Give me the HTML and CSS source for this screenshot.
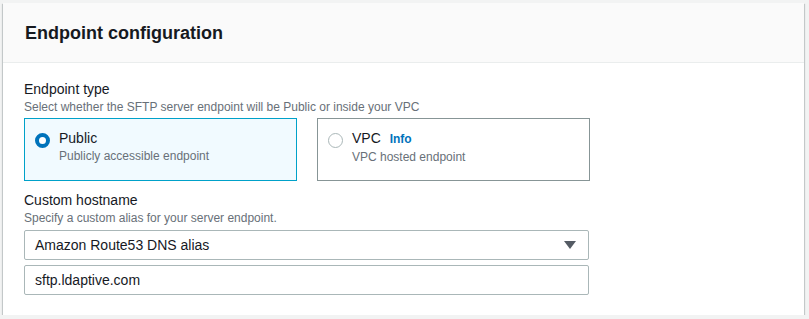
FILE: index.html
```html
<!DOCTYPE html>
<html lang="en">
<head>
    <meta charset="UTF-8">
    <meta name="viewport" content="width=device-width, initial-scale=1.0">
    <title>Endpoint configuration</title>
    <link rel="stylesheet" href="styles.css">
</head>
<body>
    <div class="panel">
        <div class="panel-header">
            <h2>Endpoint configuration</h2>
        </div>
        <div class="panel-body">
            <div class="field">
                <div class="field-label">Endpoint type</div>
                <div class="field-desc">Select whether the SFTP server endpoint will be Public or inside your VPC</div>
                <div class="tiles">
                    <div class="tile selected">
                        <span class="radio"></span>
                        <div class="tile-text">
                            <div class="tile-title">Public</div>
                            <div class="tile-desc">Publicly accessible endpoint</div>
                        </div>
                    </div>
                    <div class="tile">
                        <span class="radio"></span>
                        <div class="tile-text">
                            <div class="tile-title">VPC <a href="#" class="info">Info</a></div>
                            <div class="tile-desc">VPC hosted endpoint</div>
                        </div>
                    </div>
                </div>
            </div>
            <div class="field">
                <div class="field-label">Custom hostname</div>
                <div class="field-desc">Specify a custom alias for your server endpoint.</div>
                <div class="select">
                    <span>Amazon Route53 DNS alias</span>
                    <span class="caret"></span>
                </div>
                <input type="text" class="text-input" value="sftp.ldaptive.com">
            </div>
        </div>
    </div>
</body>
</html>
```

FILE: styles.css
```css
* {
    margin: 0;
    padding: 0;
    box-sizing: border-box;
}
body {
    font-family: 'Liberation Sans', Arial, sans-serif;
    background: #f2f3f3;
    color: #16191f;
    padding: 3px 5px 0 3px;
}
.panel {
    background: #fff;
    box-shadow: 0 1px 1px 0 rgba(0, 28, 36, .3), 1px 1px 1px 0 rgba(0, 28, 36, .15), -1px 1px 1px 0 rgba(0, 28, 36, .15);
    height: 312px;
}
.panel-header {
    height: 60px;
    background: #fafafa;
    border-bottom: 1px solid #eaeded;
    padding: 0 22px;
    display: flex;
    align-items: center;
}
.panel-header h2 {
    font-size: 18px;
    font-weight: 700;
    line-height: 22px;
    padding-top: 1px;
}
.panel-body {
    padding: 16px 21px 0;
}
.field-label {
    font-size: 14px;
    line-height: 20px;
}
.field-desc {
    font-size: 12px;
    line-height: 16px;
    color: #687078;
}
.tiles {
    display: flex;
    gap: 20px;
    margin-top: 3px;
    margin-bottom: 9px;
}
.tile {
    width: 273px;
    height: 63px;
    border: 1px solid #879596;
    padding: 9px 10px;
    display: flex;
    gap: 9px;
}
.tile.selected {
    border-color: #00a1c9;
    background: #f1faff;
}
.radio {
    width: 15px;
    height: 15px;
    border-radius: 50%;
    border: 1px solid #aab7b8;
    background: #fff;
    margin-top: 5px;
    flex-shrink: 0;
}
.tile.selected .radio {
    border: 4px solid #0073bb;
}
.tile-title {
    font-size: 14px;
    line-height: 20px;
}
.tile-desc {
    font-size: 12px;
    line-height: 16px;
    color: #687078;
}
.info {
    font-size: 12px;
    font-weight: 700;
    color: #0073bb;
    text-decoration: none;
    margin-left: 5px;
}
.select,
.text-input {
    width: 565px;
    height: 30px;
    border: 1px solid #aab7b8;
    border-radius: 2px;
    padding: 0 10px;
    font-family: inherit;
    font-size: 14px;
    color: #16191f;
    background: #fff;
}
.select {
    margin-top: 4px;
    display: flex;
    align-items: center;
    justify-content: space-between;
}
.caret {
    width: 0;
    height: 0;
    border-left: 6px solid transparent;
    border-right: 6px solid transparent;
    border-top: 8px solid #545b64;
    margin-right: 2px;
}
.text-input {
    display: block;
    margin-top: 5px;
    outline: none;
}
```
